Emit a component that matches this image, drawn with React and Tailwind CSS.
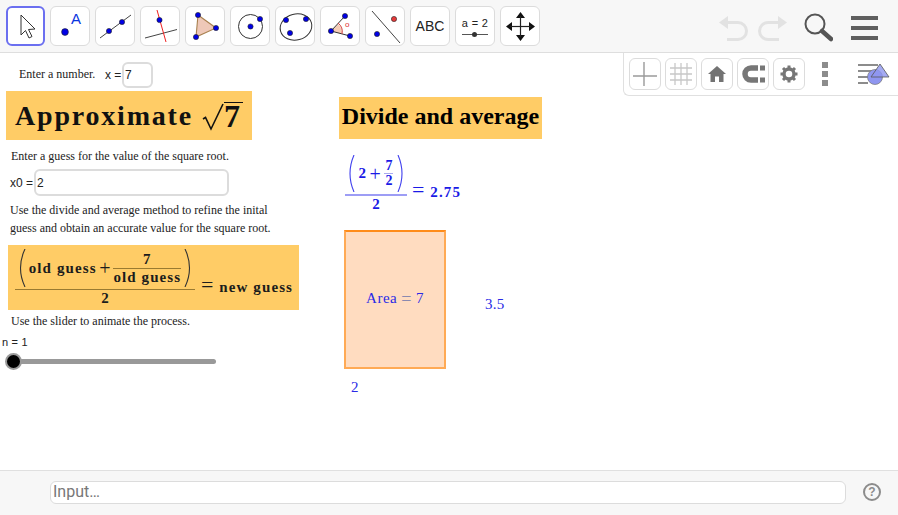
const serif = { fontFamily: '"Liberation Serif", serif' };
const sans = { fontFamily: '"Liberation Sans", sans-serif' };

function Btn({ active, children }) {
  return (
    <div className={`${active ? 'w-[39px] border-[2px] border-[#6b6ff0]' : 'w-[40px] border border-[#dcdcdc]'} h-[40px] shrink-0 rounded-[6px] bg-white flex items-center justify-center`}>
      {children}
    </div>
  );
}
const Dot = ({ x, y, r = 2.6, f = '#0000e6' }) => <circle cx={x} cy={y} r={r} fill={f} stroke="#222" strokeWidth="0.6" />;
const Ico = ({ children }) => <svg width="39" height="39" viewBox="0 0 39 39" className="block shrink-0">{children}</svg>;

function Toolbar() {
  return (
    <div className="h-[53px] bg-[#f7f7f7] border-b border-[#dedede] flex items-start pl-[6px] pr-[20px] pt-[6px] shrink-0">
      <div className="flex gap-[5px] items-center">
        <Btn active>
          <svg width="24" height="30" viewBox="0 0 24 30"><path d="M7 4 L7 24 L11.5 19.5 L15 27 L18 25.5 L14.5 18.5 L21 18 Z" fill="#fff" stroke="#333" strokeWidth="1" strokeLinejoin="round" /></svg>
        </Btn>
        <Btn><Ico><circle cx="14" cy="25" r="3.4" fill="#0000e6" stroke="#222" strokeWidth=".6" /><text x="20" y="17" fontSize="15" fill="#0a35e0" fontFamily="Liberation Sans">A</text></Ico></Btn>
        <Btn><Ico><line x1="4" y1="31" x2="35" y2="8" stroke="#444" strokeWidth="1" /><Dot x={13} y={24} /><Dot x={26} y={15} /></Ico></Btn>
        <Btn><Ico><line x1="4" y1="31" x2="36" y2="22.5" stroke="#444" strokeWidth="1" /><line x1="16" y1="3" x2="25" y2="35" stroke="#f02020" strokeWidth="1" /><Dot x={18.5} y={13} /></Ico></Btn>
        <Btn><Ico><path d="M12 8 L30 21 L10 30 Z" fill="#eec8b8" stroke="#a8804f" strokeWidth="1.1" /><Dot x={12} y={8} /><Dot x={30} y={21} /><Dot x={10} y={30} /></Ico></Btn>
        <Btn><Ico><circle cx="19.5" cy="19.5" r="12" fill="none" stroke="#333" strokeWidth="1" /><Dot x={19.5} y={19.5} /><Dot x={29} y={12} /></Ico></Btn>
        <Btn><Ico><ellipse cx="20" cy="20" rx="16" ry="13" transform="rotate(-15 20 20)" fill="none" stroke="#333" strokeWidth="1" /><Dot x={10} y={13} /><Dot x={30} y={12} /><Dot x={14} y={26} /></Ico></Btn>
        <Btn><Ico><path d="M10 24 L17 17 A 11 11 0 0 1 21 27 Z" fill="#f6cdb7" /><line x1="10" y1="24" x2="24" y2="9" stroke="#333" strokeWidth="1" /><line x1="10" y1="24" x2="29" y2="29" stroke="#333" strokeWidth="1" /><path d="M17 16 A 11 11 0 0 1 21 27" fill="none" stroke="#d04040" strokeWidth="1" /><Dot x={10} y={24} /><Dot x={24} y={9} /><Dot x={29} y={29} /><text x="24" y="20" fontSize="8" fill="#e03030" fontFamily="Liberation Sans">o</text></Ico></Btn>
        <Btn><Ico><line x1="6" y1="4" x2="34" y2="36" stroke="#444" strokeWidth="1" /><Dot x={28} y={12} f="#e63a3a" /><Dot x={11} y={27} /></Ico></Btn>
        <Btn><span className="text-[14px] text-[#222]" style={sans}>ABC</span></Btn>
        <Btn>
          <div className="flex flex-col items-center">
            <span className="text-[11px] leading-[14px] text-[#222] tracking-[.3px]" style={sans}>a = 2</span>
            <div className="relative w-[26px] h-[1px] bg-[#555] mt-[4px] mb-[2px]"><span className="absolute left-[10px] top-[-2px] w-[5px] h-[5px] rounded-full bg-[#333]" /></div>
          </div>
        </Btn>
        <Btn><Ico><path d="M19.5 5 L24 11 L15 11 Z M19.5 34 L24 28 L15 28 Z M5 19.5 L11 15 L11 24 Z M34 19.5 L28 15 L28 24 Z" fill="#111" /><line x1="19.5" y1="9" x2="19.5" y2="30" stroke="#222" strokeWidth="1.2" /><line x1="9" y1="19.5" x2="30" y2="19.5" stroke="#222" strokeWidth="1.2" /></Ico></Btn>
      </div>
      <div className="ml-auto flex items-center mt-[7px]">
        <svg width="33" height="28" viewBox="0 0 33 28" className="mr-[4px]"><path d="M10 2 L1 8.5 L10 15 Z" fill="#e2e2e2" /><path d="M8 8.5 L20 8.5 A 8.5 8.5 0 0 1 20 25.5 L9 25.5" fill="none" stroke="#e2e2e2" strokeWidth="3" /></svg>
        <svg width="33" height="28" viewBox="0 0 33 28" className="mr-[15px]"><path d="M23 2 L32 8.5 L23 15 Z" fill="#e2e2e2" /><path d="M25 8.5 L13 8.5 A 8.5 8.5 0 0 0 13 25.5 L24 25.5" fill="none" stroke="#e2e2e2" strokeWidth="3" /></svg>
        <svg width="30" height="30" viewBox="0 0 30 30" className="mr-[18px]"><circle cx="12" cy="11" r="9.5" fill="none" stroke="#555" strokeWidth="2" /><line x1="19" y1="18" x2="28" y2="26" stroke="#555" strokeWidth="4.5" strokeLinecap="round" /></svg>
        <div className="w-[27px] flex flex-col gap-[6px]">
          <div className="h-[4px] bg-[#5f5f5f]" /><div className="h-[4px] bg-[#5f5f5f]" /><div className="h-[4px] bg-[#5f5f5f]" />
        </div>
      </div>
    </div>
  );
}

function SmallBtn({ children }) {
  return <div className="w-[32px] h-[32px] rounded-[6px] border border-[#dcdcdc] bg-white flex items-center justify-center">{children}</div>;
}

function StylePanel() {
  return (
    <div className="absolute left-[623px] top-0 w-[275px] h-[43px] bg-white border-l border-b border-[#e0e0e0] rounded-bl-[6px] flex items-center pl-[5px] pb-[1px]">
      <div className="flex gap-[4px]">
        <SmallBtn><svg width="26" height="26" viewBox="0 0 26 26"><path d="M12 1 V25 M1 15 H25" stroke="#9a9a9a" strokeWidth="1.4" /></svg></SmallBtn>
        <SmallBtn><svg width="26" height="26" viewBox="0 0 26 26"><path d="M7 2 V24 M13 2 V24 M19 2 V24 M2 7 H24 M2 13 H24 M2 19 H24" stroke="#c8c8c8" strokeWidth="1.3" /></svg></SmallBtn>
        <SmallBtn><svg width="20" height="20" viewBox="0 0 20 20"><path d="M10 2 L19 10 L16.5 10 L16.5 18 L12 18 L12 12.5 L8 12.5 L8 18 L3.5 18 L3.5 10 L1 10 Z" fill="#737373" /></svg></SmallBtn>
        <SmallBtn><svg width="26" height="22" viewBox="0 0 26 22"><path d="M18 5 L11 5 A 6 6 0 0 0 11 17 L18 17" fill="none" stroke="#777" strokeWidth="5.5" /><rect x="20" y="2.5" width="5" height="5" fill="#777" /><rect x="20" y="14.5" width="5" height="5" fill="#777" /></svg></SmallBtn>
        <SmallBtn><svg width="20" height="20" viewBox="0 0 20 20"><circle cx="10" cy="10" r="5" fill="none" stroke="#777" strokeWidth="3.4" /><path d="M10 1.5 V5 M10 15 V18.5 M1.5 10 H5 M15 10 H18.5 M4 4 L6.5 6.5 M13.5 13.5 L16 16 M16 4 L13.5 6.5 M6.5 13.5 L4 16" stroke="#777" strokeWidth="3" /></svg></SmallBtn>
      </div>
      <div className="w-[6px] flex flex-col gap-[3px] ml-[17px]">
        <div className="h-[6px] bg-[#8c8c8c]" /><div className="h-[6px] bg-[#8c8c8c]" /><div className="h-[6px] bg-[#8c8c8c]" />
      </div>
      <svg width="36" height="28" viewBox="0 0 36 28" className="ml-[30px]">
        <path d="M0 5 H20 M0 11 H16 M0 17 H12 M0 23 H10" stroke="#8c8c8c" strokeWidth="1.8" />
        <circle cx="17" cy="17" r="7.5" fill="#8f96f0" stroke="#777" strokeWidth=".7" />
        <path d="M22 4 L31 17 L13 17 Z" fill="#8f96f0" fillOpacity=".8" stroke="#555" strokeWidth=".8" />
      </svg>
    </div>
  );
}

function Paren({ h, w = 9, right, color, sw = 1.1 }) {
  return (
    <svg width={w} height={h} viewBox={`0 0 ${w} ${h}`} className="shrink-0">
      <path d={right ? `M1 0 Q${w + 1} ${h / 2} 1 ${h}` : `M${w - 1} 0 Q-1 ${h / 2} ${w - 1} ${h}`} fill="none" stroke={color} strokeWidth={sw} />
    </svg>
  );
}

function Canvas() {
  const mathBold = { fontFamily: '"Liberation Serif", serif', fontWeight: 700 };
  return (
    <div className="relative flex-1 bg-white overflow-hidden">
      <StylePanel />
      <div className="absolute left-[19px] top-[13px] text-[12px] leading-[16px] text-[#222] whitespace-nowrap" style={serif}>Enter a number.</div>
      <div className="absolute left-[105px] top-[9px] flex items-center text-[12px] text-[#222]" style={sans}>
        <span className="w-[17px]">x =</span>
        <div className="w-[31px] h-[26px] border-[2px] border-[#dcdcdc] rounded-[6px] bg-white pl-[1px] flex items-center">7</div>
      </div>

      <div className="absolute left-[6px] top-[38px] w-[246px] h-[49px] bg-[#ffcc66] flex items-center pl-[9px] whitespace-nowrap text-[#111]" style={serif}>
        <span className="text-[28px] font-bold tracking-[1.8px]">Approximate</span>
        <svg width="22" height="28" viewBox="0 0 22 28" className="ml-[9px] mt-[2px] shrink-0"><path d="M1 16 L3.5 14.5 L9 26 L21 1" fill="none" stroke="#111" strokeWidth="1.6" /></svg>
        <div className="border-t-[1.5px] border-[#111] text-[32px] font-bold leading-[26px] w-[19px] mt-[-1px] shrink-0">7</div>
      </div>

      <div className="absolute left-[11px] top-[95px] text-[12px] leading-[16px] text-[#222] whitespace-nowrap" style={serif}>Enter a guess for the value of the square root.</div>
      <div className="absolute left-[10px] top-[116px] flex items-center text-[12px] text-[#222]" style={sans}>
        <span className="w-[24px]">x0 =</span>
        <div className="w-[195px] h-[27px] border-[2px] border-[#dcdcdc] rounded-[6px] bg-white pl-[1px] flex items-center">2</div>
      </div>
      <div className="absolute left-[10px] top-[148px] text-[12px] leading-[18px] text-[#222] whitespace-nowrap" style={serif}>
        <div>Use the divide and average method to refine the inital</div>
        <div>guess and obtain an accurate value for the square root.</div>
      </div>

      <div className="absolute left-[8px] top-[192px] w-[291px] h-[65px] bg-[#ffcc66] flex items-center pl-[7px] text-[#1c1c1c] whitespace-nowrap" style={mathBold}>
        <div className="flex flex-col items-stretch w-[180px] shrink-0">
          <div className="flex items-center justify-between px-[2px] h-[41px]">
            <Paren h={38} color="#333" />
            <span className="text-[15px] tracking-[1.1px]">old guess</span>
            <span className="text-[20px] font-normal leading-none">+</span>
            <div className="flex flex-col items-center text-[15px] leading-[15px] tracking-[1.1px]">
              <span>7</span>
              <div className="h-[1.5px] w-full bg-[#9a7a30] my-[1px]" />
              <span>old guess</span>
            </div>
            <Paren h={38} right color="#333" />
          </div>
          <div className="h-[1.5px] bg-[#9a7a30]" />
          <div className="text-center text-[15px] leading-[17px]">2</div>
        </div>
        <span className="text-[15px] tracking-[1.1px] ml-[6px] mt-[17px]"><span className="font-normal text-[22px] leading-none">=</span> new guess</span>
      </div>

      <div className="absolute left-[11px] top-[260px] text-[12px] leading-[16px] text-[#222] whitespace-nowrap" style={serif}>Use the slider to animate the process.</div>
      <div className="absolute left-[2px] top-[283px] text-[11px] leading-[12px] text-[#222] tracking-[.2px] whitespace-nowrap" style={sans}>n = 1</div>
      <div className="absolute left-[12px] top-[306px] w-[204px] h-[5px] rounded-full bg-[#999]" />
      <div className="absolute left-[5px] top-[300px] w-[17px] h-[17px] rounded-full bg-black border-[2px] border-[#9a9a9a]" />

      <div className="absolute left-[339px] top-[44px] w-[203px] h-[42px] bg-[#ffcc66] flex items-center justify-center pb-[4px] text-[24px] font-bold text-black whitespace-nowrap" style={serif}>Divide and average</div>

      <div className="absolute left-[345px] top-[100px] flex items-center text-[#1a1ae6] whitespace-nowrap" style={mathBold}>
        <div className="flex flex-col items-stretch w-[62px] shrink-0">
          <div className="flex items-center justify-between px-[2px] h-[41px]">
            <Paren h={37} color="#4040ee" w={8} />
            <span className="text-[15px]">2</span>
            <span className="text-[20px] font-normal leading-none">+</span>
            <div className="flex flex-col items-center text-[14px] leading-[14px] w-[9px]">
              <span>7</span>
              <div className="h-[1px] w-full bg-[#aaaaf0]" />
              <span>2</span>
            </div>
            <Paren h={37} right color="#4040ee" w={8} />
          </div>
          <div className="h-[1.5px] bg-[#9d9df5]" />
          <div className="text-center text-[15px] leading-[17px]">2</div>
        </div>
        <span className="text-[15px] tracking-[1.1px] ml-[5px] mt-[16px]"><span className="font-normal text-[22px] leading-none">=</span> 2.75</span>
      </div>

      <div className="absolute left-[344px] top-[177px] w-[102px] h-[139px] bg-[#ffdcc0] border-[2px] border-[#ffaa55] border-t-[#ff8c1a] flex items-center justify-center pb-[2px] text-[15px] tracking-[.5px] text-[#2a2ae6] whitespace-nowrap" style={serif}>
        Area <span className="mx-[4px] text-[18px] leading-none text-[#8a8ab0]">=</span> 7
      </div>
      <div className="absolute left-[485px] top-[243px] text-[15px] leading-[16px] text-[#2a2ae6] tracking-[.3px]" style={serif}>3.5</div>
      <div className="absolute left-[351px] top-[326px] text-[15px] leading-[16px] text-[#2a2ae6]" style={serif}>2</div>
    </div>
  );
}

function InputBar() {
  return (
    <div className="h-[45px] bg-[#f7f7f7] border-t border-[#e0e0e0] flex items-center pl-[50px] pr-[16px] pb-[2px] shrink-0">
      <div className="w-[796px] h-[23px] bg-white border border-[#dcdcdc] rounded-[6px] flex items-center pl-[2px] text-[16px] text-[#777]" style={{ fontFamily: '"Roboto", sans-serif' }}>Input…</div>
      <div className="ml-auto mr-[1px] w-[18px] h-[18px] rounded-full border-[2px] border-[#8c8c8c] flex items-center justify-center text-[12px] font-bold text-[#8c8c8c]" style={sans}>?</div>
    </div>
  );
}

export default function App() {
  return (
    <div className="w-[898px] h-[515px] flex flex-col overflow-hidden bg-white">
      <Toolbar />
      <Canvas />
      <InputBar />
    </div>
  );
}
